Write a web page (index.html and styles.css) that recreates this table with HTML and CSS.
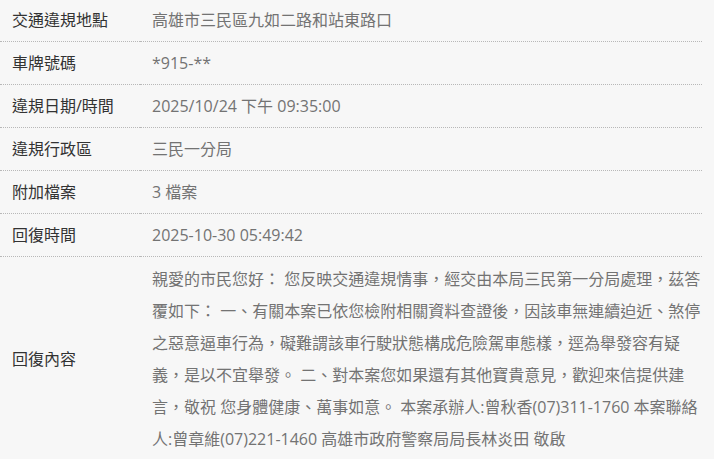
FILE: index.html
```html
<!DOCTYPE html>
<html lang="zh-Hant">
<head>
<meta charset="utf-8">
<link rel="stylesheet" href="styles.css">
</head>
<body>
<table class="detail">
  <tr><th>交通違規地點</th><td>高雄市三民區九如二路和站東路口</td></tr>
  <tr><th>車牌號碼</th><td>*915-**</td></tr>
  <tr><th>違規日期/時間</th><td>2025/10/24 下午 09:35:00</td></tr>
  <tr><th>違規行政區</th><td>三民一分局</td></tr>
  <tr><th>附加檔案</th><td>3 檔案</td></tr>
  <tr><th>回復時間</th><td>2025-10-30 05:49:42</td></tr>
  <tr class="long"><th>回復內容</th><td>親愛的市民您好： 您反映交通違規情事，經交由本局三民第一分局處理，茲答覆如下： 一、有關本案已依您檢附相關資料查證後，因該車無連續迫近、煞停之惡意逼車行為，礙難謂該車行駛狀態構成危險駕車態樣，逕為舉發容有疑義，是以不宜舉發。 二、對本案您如果還有其他寶貴意見，歡迎來信提供建言，敬祝 您身體健康、萬事如意。 本案承辦人:曾秋香(07)311-1760 本案聯絡人:曾章維(07)221-1460 高雄市政府警察局局長林炎田 敬啟</td></tr>
</table>
</body>
</html>
```
FILE: styles.css
```css
html, body {
  margin: 0;
  padding: 0;
  background: #f7f7f7;
}
body {
  font-family: "Open Sans", "Noto Sans CJK TC", sans-serif;
  font-size: 16px;
}
.detail {
  width: 702px;
  margin-top: -1px;
  border-collapse: collapse;
}
.detail th,
.detail td {
  border-bottom: 1px dotted #b8b8b8;
  padding: 7px 0 7px 12px;
  line-height: 28px;
  vertical-align: middle;
  text-align: left;
  font-weight: normal;
}
.detail th {
  width: 128px;
  color: #333;
  white-space: nowrap;
}
.detail td {
  color: #737373;
}
.detail .long td {
  padding-top: 6px;
  padding-bottom: 6px;
  line-height: 32px;
}
```
